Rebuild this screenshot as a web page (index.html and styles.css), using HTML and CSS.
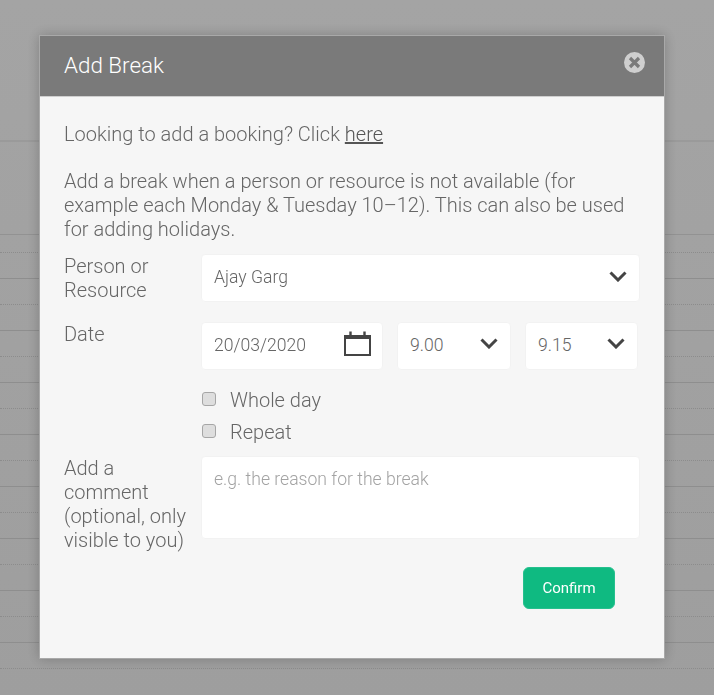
FILE: index.html
```html
<!DOCTYPE html>
<html>
<head>
  <meta charset="UTF-8">
  <title>Add Break</title>
  <link rel="stylesheet" href="styles.css">
</head>
<body>
  <div class="backdrop">
    <div class="grid-head"></div>
    <div class="grid-short"></div>
    <div class="grid-row"></div>
    <div class="grid-row"></div>
    <div class="grid-row"></div>
    <div class="grid-row"></div>
    <div class="grid-row"></div>
    <div class="grid-row"></div>
    <div class="grid-row"></div>
    <div class="grid-row"></div>
  </div>
  <div class="modal">
    <div class="modal-head">
      <h2>Add Break</h2>
      <svg class="close" width="21" height="21" viewBox="0 0 21 21">
        <circle cx="10.5" cy="10.5" r="10.5" fill="#cfcfcf"/>
        <path d="M6 6l9 9M15 6l-9 9" stroke="#7b7b7b" stroke-width="3.2" fill="none"/>
      </svg>
    </div>
    <div class="modal-body">
      <p class="intro">Looking to add a booking? Click <a href="#">here</a></p>
      <p class="note">Add a break when a person or resource is not available (for example each Monday &amp; Tuesday 10–12). This can also be used for adding holidays.</p>
      <div class="row row-person">
        <label>Person or Resource</label>
        <div class="field grow">
          <span>Ajay Garg</span>
          <svg class="chev" width="18" height="11" viewBox="0 0 18 11"><path d="M1.5 1.5L9 9l7.5-7.5" fill="none" stroke="#444" stroke-width="3"/></svg>
        </div>
      </div>
      <div class="row row-date">
        <label>Date</label>
        <div class="controls">
          <div class="field">
            <span>20/03/2020</span>
            <svg class="cal" width="27" height="25" viewBox="0 0 27 25">
              <path d="M1 5h25v19H1z" fill="none" stroke="#444" stroke-width="2"/>
              <path d="M0 4h27v4H0z" fill="#444"/>
              <path d="M6.5 0.5v4M20.5 0.5v4" stroke="#444" stroke-width="2.4"/>
            </svg>
          </div>
          <div class="field">
            <span>9.00</span>
            <svg class="chev chev-up" width="18" height="11" viewBox="0 0 18 11"><path d="M1.5 1.5L9 9l7.5-7.5" fill="none" stroke="#444" stroke-width="3"/></svg>
          </div>
          <div class="field">
            <span>9.15</span>
            <svg class="chev chev-up" width="18" height="11" viewBox="0 0 18 11"><path d="M1.5 1.5L9 9l7.5-7.5" fill="none" stroke="#444" stroke-width="3"/></svg>
          </div>
        </div>
      </div>
      <div class="checks">
        <div class="check"><input type="checkbox" id="whole"><label for="whole">Whole day</label></div>
        <div class="check"><input type="checkbox" id="repeat"><label for="repeat">Repeat</label></div>
      </div>
      <div class="row row-comment">
        <label>Add a comment (optional, only visible to you)</label>
        <div class="field grow comment">e.g. the reason for the break</div>
      </div>
      <div class="actions"><button type="button">Confirm</button></div>
    </div>
  </div>
</body>
</html>
```

FILE: styles.css
```css
html, body {height: 100%}
body {margin: 0; height: 695px; overflow: hidden; background: #a1a1a1; color: #666; font-family: Roboto, "Liberation Sans", sans-serif; font-weight: 300; font-size: 20px; line-height: 24px; position: relative}

.backdrop {height: 100%; background: linear-gradient(#a4a4a4, #9e9e9e)}
.grid-head {height: 140px; border-bottom: 2px solid #9a9a9a; margin-bottom: 92px}
.grid-short {height: 44px; border-top: 1px solid #929292; box-sizing: border-box; position: relative}
.grid-row {height: 52px; border-top: 1px solid #8e8e8e; box-sizing: border-box; position: relative}
.grid-short::after, .grid-row::after {content: ""; position: absolute; left: 0; right: 0; border-top: 1px dotted #8c8c8c}
.grid-short::after {top: 17px}
.grid-row::after {top: 25px}

.modal {position: absolute; left: 39px; top: 35px; width: 626px; height: 624px; box-sizing: border-box; border: 1px solid #a9a9a9; background: #f6f6f6; box-shadow: 0 0 12px rgba(0,0,0,0.22); opacity: 0.999}
.modal-head {height: 61px; background: #7a7a7a; border-bottom: 1px solid #cfcfcf; display: flex; align-items: center; justify-content: space-between; padding: 0 19px 2px 24px; box-sizing: border-box}
.modal-head h2 {margin: 0; font-size: 22.4px; font-weight: 300; color: #fff}
.close {margin-bottom: 5px}

.modal-body {padding: 25px 24px 0}
.modal-body p {margin: 0}
.modal-body .intro {margin-bottom: 23px}
.intro a {color: #555}
.modal-body .note {margin-bottom: 13px}

.row {display: flex}
.row > label {width: 137px; flex: none; padding-right: 12px; box-sizing: border-box}
.row-person {margin-bottom: 20px}
.controls {display: grid; grid-template-columns: 182px 114px 113px; gap: 14px}

.field {background: #fff; border-radius: 4px; height: 48px; box-sizing: border-box; padding: 0 12px 2px; display: flex; align-items: center; justify-content: space-between; font-size: 17.6px; border: 1px solid #f2f2f2}
.grow {flex: 1}
.chev {flex: none; margin-bottom: 1px}
.chev-up {margin-bottom: 3px}
.cal {margin: 0 -1px 3px 0}

.checks {padding: 14px 0 0 137px; margin-bottom: 8px}
.check {display: flex; align-items: center; height: 32px}
.check input {appearance: none; box-sizing: border-box; margin: 0 14px 2px 1px; width: 14px; height: 14px; flex: none; background: #dedede; border: 1px solid #a6a6a6; border-radius: 3px}

.comment {height: 83px; align-items: flex-start; padding-top: 10px; color: #a3a3a3}

.actions {display: flex; justify-content: flex-end; padding: 15px 25px 0 0}
.actions button {width: 92px; height: 42px; background: #0fba81; color: #fff; border: 1px solid #26c08e; border-radius: 6px; font-family: Roboto, sans-serif; font-size: 15px; font-weight: 400}
```
